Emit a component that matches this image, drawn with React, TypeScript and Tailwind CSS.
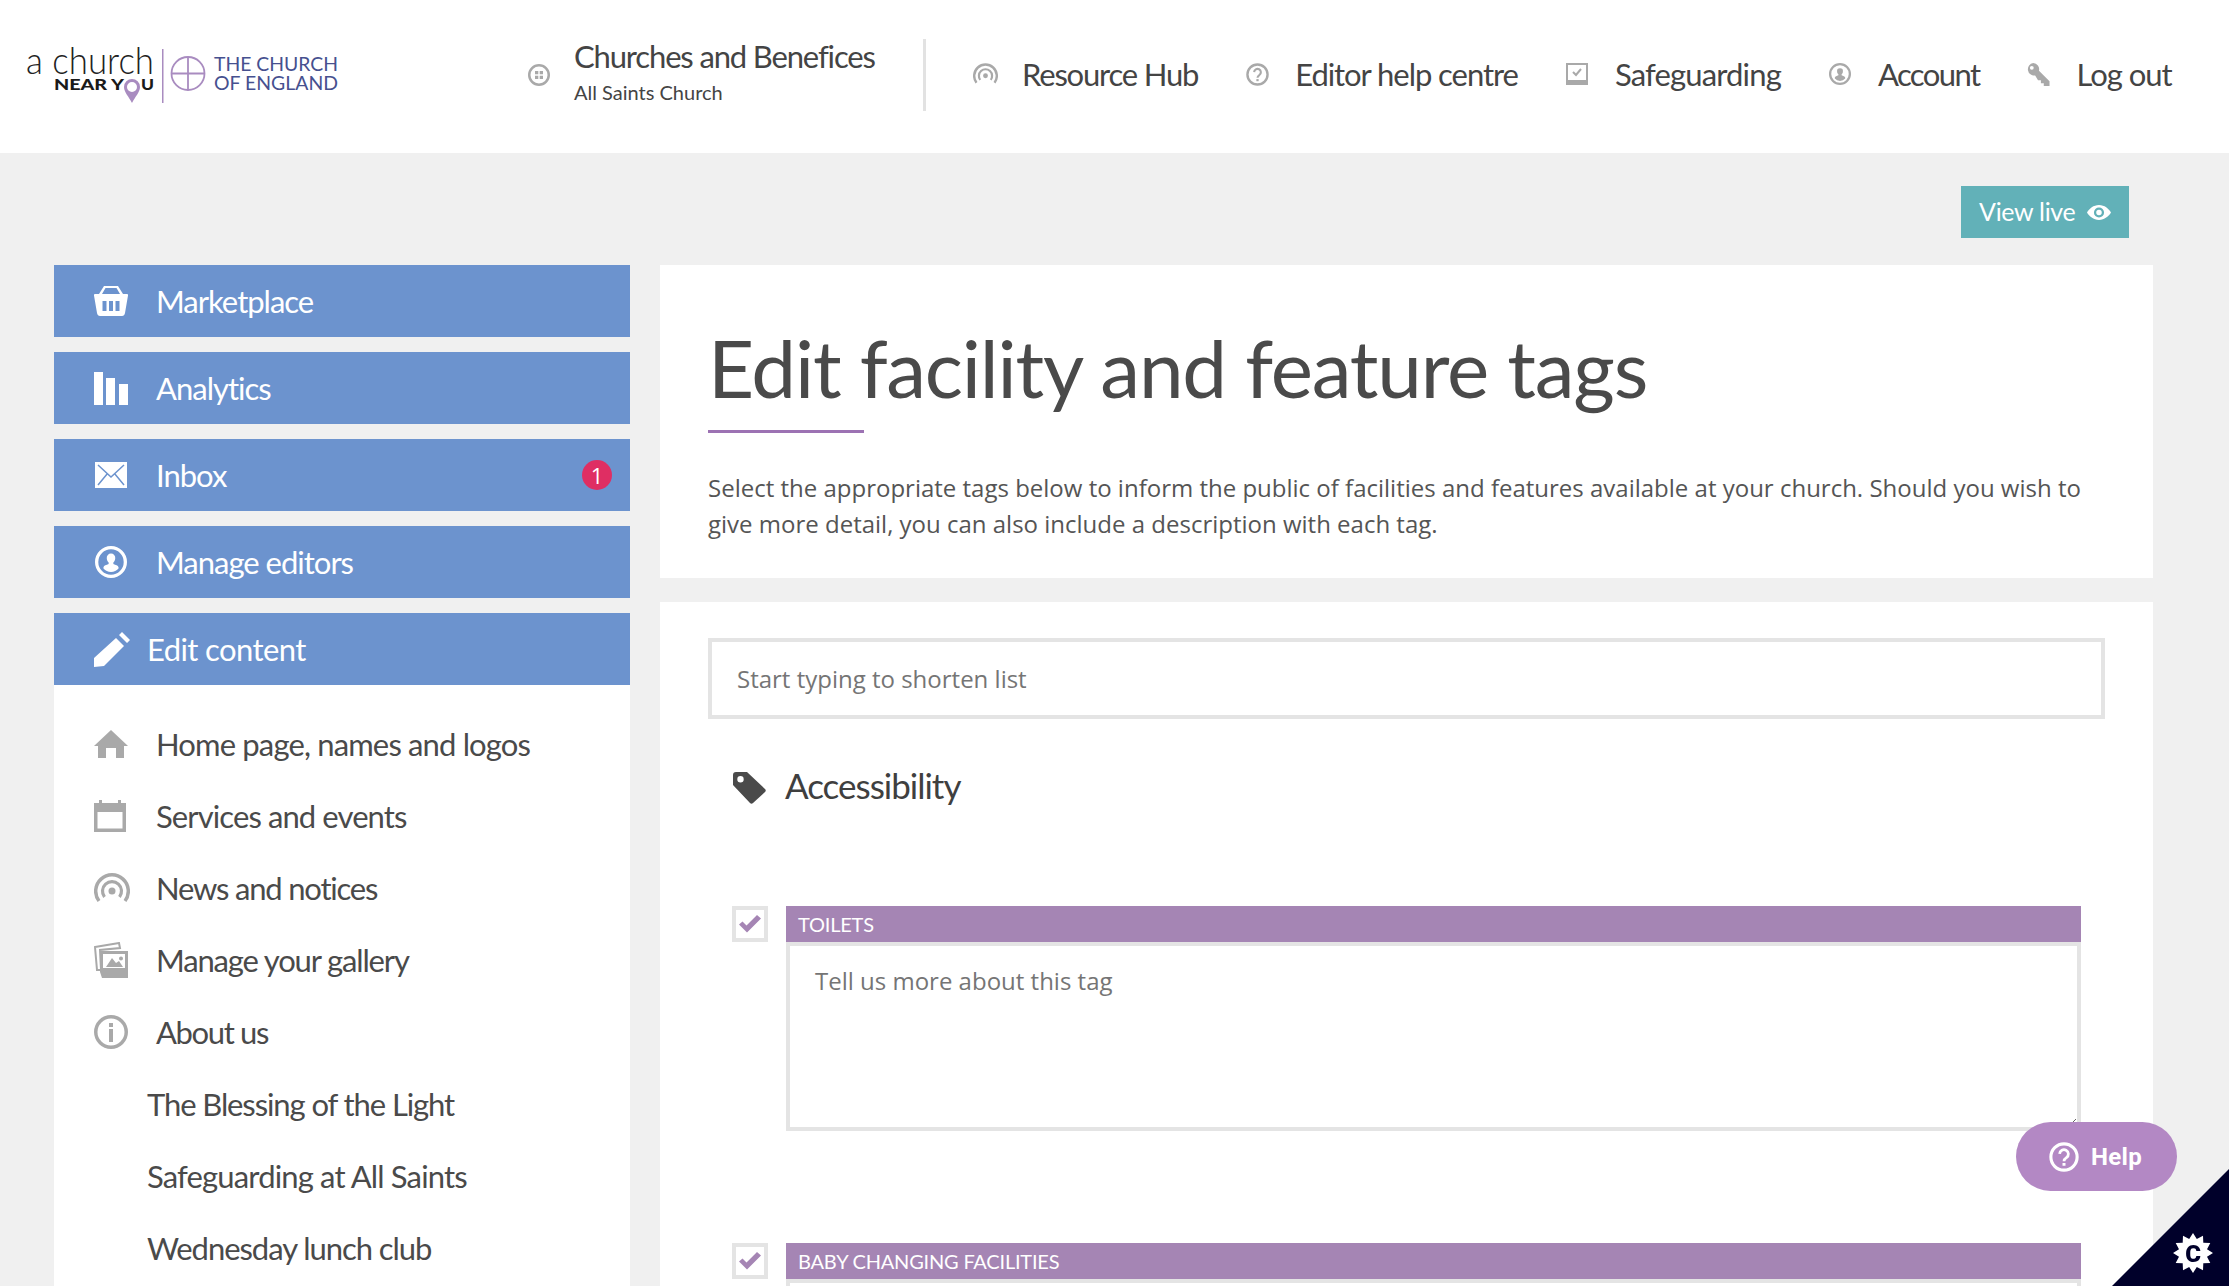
import type { ReactNode } from 'react';

const star = Array.from({ length: 24 }, (_, i) => {
  const r = i % 2 === 0 ? 20 : 14.5;
  const a = (i * Math.PI) / 12;
  return `${(38 + r * Math.sin(a)).toFixed(1)},${(84 + r * Math.cos(a)).toFixed(1)}`;
}).join(' ');

function Logo() {
  return (
    <svg width="315" height="60" viewBox="0 0 315 60" className="mt-px shrink-0 overflow-visible">
      <text x="0" y="28" fontFamily="Lato, sans-serif" fontWeight="300" fontSize="37" fill="#222" textLength="128" lengthAdjust="spacingAndGlyphs">a church</text>
      <text x="28" y="43.500" fontFamily="Lato, sans-serif" fontWeight="900" fontSize="15.5" fill="#1a1a1a" textLength="70" lengthAdjust="spacingAndGlyphs">NEAR Y</text>
      <text x="115" y="43.500" fontFamily="Lato, sans-serif" fontWeight="900" fontSize="15.5" fill="#1a1a1a" textLength="13" lengthAdjust="spacingAndGlyphs">U</text>
      <path fillRule="evenodd" d="M106 33a8 8 0 0 1 8 8c0 5-5 10-8 16-3-6-8-11-8-16a8 8 0 0 1 8-8zm0 3a5 5 0 1 0 0 10 5 5 0 0 0 0-10z" fill="#a98cc0" />
      <rect x="136" y="3" width="1.5" height="54" fill="#a98cc0" />
      <circle cx="162" cy="27.5" r="16.5" fill="none" stroke="#a98cc0" strokeWidth="1.8" />
      <path d="M162 11v33M145.5 27.5h33" stroke="#a98cc0" strokeWidth="1.8" />
      <text x="188" y="24.500" fontFamily="Lato, sans-serif" fontSize="19.5" fill="#46508f" textLength="124" lengthAdjust="spacingAndGlyphs">THE CHURCH</text>
      <text x="188" y="43.500" fontFamily="Lato, sans-serif" fontSize="19.5" fill="#46508f" textLength="124" lengthAdjust="spacingAndGlyphs">OF ENGLAND</text>
    </svg>
  );
}

type IconProps = { className?: string };

function Basket({ className }: IconProps) {
  return (
    <svg viewBox="0 0 34 30" className={className} fill="currentColor">
      <path fillRule="evenodd" d="M10 0h14l5 8h4a1 1 0 0 1 1 1.500L31 27c-.3 2-1.500 3-3 3H6c-1.500 0-2.700-1-3-3L0 9.500A1 1 0 0 1 1 8h4l5-8zm1.500 2L8 8h18l-3.500-6h-11zM8.500 15v10h4V15h-4zm6.500 0v10h4V15h-4zm6.500 0v10h4V15h-4z" />
    </svg>
  );
}

function Bars({ className }: IconProps) {
  return (
    <svg viewBox="0 0 34 33" className={className} fill="currentColor">
      <path d="M0 0h9v33H0zM12 6h9v27h-9zM25 12h9v21h-9z" />
    </svg>
  );
}

function Envelope({ className }: IconProps) {
  return (
    <svg viewBox="0 0 32 26" className={className}>
      <rect width="32" height="26" fill="currentColor" />
      <path d="M3 3l13 12L29 3M3 23l9.500-11.500M29 23L19.500 11.500" fill="none" stroke="#6c93ce" strokeWidth="1.500" />
    </svg>
  );
}

function UserCircle({ className }: IconProps) {
  return (
    <svg viewBox="0 0 34 34" className={className} fill="currentColor">
      <path fillRule="evenodd" d="M17 0a17 17 0 1 1 0 34 17 17 0 0 1 0-34zm0 3.500a13.500 13.500 0 1 0 0 27 13.500 13.500 0 0 0 0-27z" />
      <path d="M17 8a4.500 4.500 0 0 1 4.500 5c0 2-1 3.500-2 4.500v1.500c2.500 1 5 1.500 5.500 3.500v1.500a10.500 10.500 0 0 1-16 0v-1.500c.5-2 3-2.500 5.500-3.500v-1.500c-1-1-2-2.500-2-4.500A4.500 4.500 0 0 1 17 8z" />
    </svg>
  );
}

function Pencil({ className }: IconProps) {
  return (
    <svg viewBox="0 0 36 35" className={className} fill="currentColor">
      <path d="M28 0l8 8-3 3-8-8zM22 6l8 8-20 20-10 1v-9z" />
    </svg>
  );
}

function Home({ className }: IconProps) {
  return (
    <svg viewBox="0 0 34 28" className={className} fill="currentColor">
      <path d="M17 0l17 16h-4v12h-8V18H12v10H4V16H0z" />
    </svg>
  );
}

function Calendar({ className }: IconProps) {
  return (
    <svg viewBox="0 0 32 32" className={className} fill="currentColor">
      <path fillRule="evenodd" d="M5 0h3v3h16V0h3v3h5v29H0V3h5V0zM3.500 12v16.500h25V12h-25z" />
    </svg>
  );
}

function Radio({ className }: IconProps) {
  return (
    <svg viewBox="0 0 36 31" className={className} fill="none" stroke="currentColor">
      <path strokeWidth="3.500" d="M5 28A16.300 16.300 0 1 1 31 28" />
      <path strokeWidth="3.200" d="M10.500 24A9.500 9.500 0 1 1 25.500 24" />
      <circle cx="18" cy="18" r="3.500" fill="currentColor" stroke="none" />
    </svg>
  );
}

function Gallery({ className }: IconProps) {
  return (
    <svg viewBox="0 0 34 36" className={className}>
      <path d="M1 5l24-4 1 5-20 2 1 20H3z" fill="none" stroke="currentColor" strokeWidth="2" />
      <path fillRule="evenodd" fill="currentColor" d="M6 9h28v27H8l-2-6V9zm3 3v14h22V12H9z" />
      <path fill="currentColor" d="M12 25l6-9 4 5 3-2 4 6zM27 14.500a2 2 0 1 1 0 4 2 2 0 0 1 0-4z" />
    </svg>
  );
}

function Info({ className }: IconProps) {
  return (
    <svg viewBox="0 0 34 34" className={className} fill="currentColor">
      <path fillRule="evenodd" d="M17 0a17 17 0 1 1 0 34 17 17 0 0 1 0-34zm0 3.500a13.500 13.500 0 1 0 0 27 13.500 13.500 0 0 0 0-27z" />
      <path d="M15 8h4v4h-4zM15 14h4v13h-4z" />
    </svg>
  );
}

function Grid({ className }: IconProps) {
  return (
    <svg viewBox="0 0 22 22" className={className} fill="currentColor">
      <path fillRule="evenodd" d="M11 0a11 11 0 1 1 0 22 11 11 0 0 1 0-22zm0 2.500a8.500 8.500 0 1 0 0 17 8.500 8.500 0 0 0 0-17z" />
      <path d="M7 7h3.300v3.300H7zM11.700 7H15v3.300h-3.300zM7 11.700h3.300V15H7zM11.700 11.700H15V15h-3.300z" />
    </svg>
  );
}

function Question({ className }: IconProps) {
  return (
    <svg viewBox="0 0 24 24" className={className} fill="none" stroke="currentColor">
      <circle cx="12" cy="12" r="10.500" strokeWidth="2.500" />
      <path strokeWidth="2.200" d="M8.500 9.500a3.500 3.500 0 1 1 5.500 3c-1.200.8-2 1.300-2 2.800" />
      <path strokeWidth="2.400" d="M12 16.800v2.200" />
    </svg>
  );
}

function CheckSquare({ className }: IconProps) {
  return (
    <svg viewBox="0 0 22 22" className={className}>
      <path fillRule="evenodd" fill="currentColor" d="M0 0h22v22H0V0zm2 2v15h18V2H2z" />
      <path d="M7 9l3 3 5-6" fill="none" stroke="currentColor" strokeWidth="2" />
    </svg>
  );
}

function Key({ className }: IconProps) {
  return (
    <svg viewBox="0 0 23 24" className={className} fill="currentColor">
      <path fillRule="evenodd" d="M6 0a6.500 6.500 0 0 1 6 8l11 11v5h-6v-3h-3v-3h-3l-3-5A6.500 6.500 0 0 1 6 0zM4.500 3a2 2 0 1 0 0 4 2 2 0 0 0 0-4z" />
    </svg>
  );
}

function Eye({ className }: IconProps) {
  return (
    <svg viewBox="0 0 26 16" className={className} fill="currentColor">
      <path fillRule="evenodd" d="M13 0c6 0 10.500 4 13 8-2.500 4-7 8-13 8S2.500 12 0 8c2.500-4 7-8 13-8zm0 2.500a5.500 5.500 0 1 0 0 11 5.500 5.500 0 0 0 0-11zm0 2.500a3 3 0 1 1 0 6 3 3 0 0 1 0-6z" />
    </svg>
  );
}

function Tag({ className }: IconProps) {
  return (
    <svg viewBox="0 0 33 32" className={className} fill="currentColor">
      <path fillRule="evenodd" d="M3 0h11l18 17c1 1 1 2 0 3L20 31c-1 1-2 1-3 0L0 13V3c0-2 1-3 3-3zm4.500 4a3.200 3.200 0 1 0 0 6.400 3.200 3.200 0 0 0 0-6.400z" />
    </svg>
  );
}

function Check({ className }: IconProps) {
  return (
    <svg viewBox="0 0 22 18" className={className} fill="currentColor">
      <path d="M0 9.500l3.500-3 4 4L18 0l4 3.500L8 17.500z" />
    </svg>
  );
}

function NavLink({ icon, label, className }: { icon: ReactNode; label: string; className: string }) {
  return (
    <a className={`flex items-center text-[#444] ${className}`}>
      <span className="flex w-[49px] shrink-0 text-[#a9a9a9]">{icon}</span>
      {label}
    </a>
  );
}

function BlueItem({ icon, label, badge, tight }: { icon: ReactNode; label: string; badge?: string; tight?: boolean }) {
  return (
    <div className="flex h-[72px] items-center bg-[#6c93ce] pl-10 pr-[18px] text-white">
      <span className={tight ? 'flex w-[53px] shrink-0' : 'flex w-[62px] shrink-0'}>{icon}</span>
      <span className={tight ? 'text-[31px] tracking-[-0.6px]' : 'text-[31px] tracking-[-1px]'}>{label}</span>
      {badge && (
        <span className="ml-auto flex size-[30px] items-center justify-center rounded-full bg-[#df2e63] font-['Open_Sans',sans-serif] text-[22px] leading-none">
          {badge}
        </span>
      )}
    </div>
  );
}

function MenuItem({ icon, label, className }: { icon?: ReactNode; label: string; className: string }) {
  return (
    <div className={`flex h-[72px] items-center pl-10 text-[31px] text-[#4a4a4a] ${className}`}>
      {icon ? <span className="flex w-[62px] shrink-0 text-[#a9a9a9]">{icon}</span> : <span className="w-[53px] shrink-0" />}
      {label}
    </div>
  );
}

function TagRow({ label, className }: { label: string; className?: string }) {
  return (
    <div className={`flex items-start ${className ?? ''}`}>
      <div className="flex size-9 shrink-0 items-center justify-center border-4 border-[#e4e4e4] text-[#a585b4]">
        <Check className="h-[18px] w-[22px]" />
      </div>
      <div className="ml-[18px] flex-1">
        <div className="flex h-9 items-center bg-[#a585b4] pb-px pl-3 text-xl tracking-[-0.2px] text-white">{label}</div>
        <textarea
          placeholder="Tell us more about this tag"
          className="block h-[189px] w-full border-4 border-[#e4e4e4] px-[25px] py-[19px] font-['Open_Sans',sans-serif] text-2xl text-[#444] outline-none placeholder:text-[#757575]"
        />
      </div>
    </div>
  );
}

export default function App() {
  return (
    <div className="relative flex h-screen flex-col overflow-hidden bg-[#f0f0f0] font-[Lato,sans-serif]">
      <header className="flex h-[153px] shrink-0 items-center bg-white pb-[3px] pl-[26px]">
        <Logo />
        <div className="ml-[187px] flex items-center">
          <span className="flex w-[46px] text-[#a9a9a9]"><Grid className="size-[22px]" /></span>
          <div className="mt-[-7px] w-[349px]">
            <div className="text-[31px] leading-[38px] tracking-[-1.15px] text-[#444]">Churches and Benefices</div>
            <div className="mt-[3px] text-xl leading-7 tracking-normal text-[#444]">All Saints Church</div>
          </div>
        </div>
        <div className="h-[72px] w-[3px] bg-[#e2e2e2]" />
        <nav className="ml-[47px] mt-[-2px] flex items-center text-[31px]">
          <NavLink icon={<Radio className="h-[22px] w-[25px] text-[#a9a9a9]" />} label="Resource Hub" className="mr-[48px] tracking-[-1.2px]" />
          <NavLink icon={<Question className="size-[23px]" />} label="Editor help centre" className="mr-[48px] tracking-[-1.05px]" />
          <NavLink icon={<CheckSquare className="size-[22px]" />} label="Safeguarding" className="mr-[48px] tracking-[-0.85px]" />
          <NavLink icon={<UserCircle className="size-[22px]" />} label="Account" className="mr-[48px] tracking-[-1.6px]" />
          <NavLink icon={<Key className="size-[23px]" />} label="Log out" className="tracking-[-1px]" />
        </nav>
      </header>

      <div className="flex h-[112px] shrink-0 items-start justify-end pr-[100px] pt-[33px]">
        <a className="flex h-[52px] w-[168px] items-center bg-[#62b1b8] pl-[18px] text-[25px] tracking-[-0.3px] text-white">
          View live
          <Eye className="ml-3 h-[15px] w-[24px]" />
        </a>
      </div>

      <div className="flex min-h-0 flex-1 pl-[54px] pr-[76px]">
        <aside className="flex w-[576px] shrink-0 flex-col">
          <div className="flex flex-col gap-[15px]">
            <BlueItem icon={<Basket className="h-[30px] w-[34px]" />} label="Marketplace" />
            <BlueItem icon={<Bars className="h-[33px] w-[34px]" />} label="Analytics" />
            <BlueItem icon={<Envelope className="ml-px h-[26px] w-8" />} label="Inbox" badge="1" />
            <BlueItem icon={<UserCircle className="ml-px size-8" />} label="Manage editors" />
            <BlueItem icon={<Pencil className="h-[35px] w-9" />} label="Edit content" tight />
          </div>
          <div className="flex-1 bg-white pt-[23px]">
            <MenuItem icon={<Home className="h-[28px] w-[34px]" />} label="Home page, names and logos" className="tracking-[-0.85px]" />
            <MenuItem icon={<Calendar className="size-[32px]" />} label="Services and events" className="tracking-[-0.9px]" />
            <MenuItem icon={<Radio className="h-[31px] w-[36px]" />} label="News and notices" className="tracking-[-1.2px]" />
            <MenuItem icon={<Gallery className="h-[36px] w-[34px]" />} label="Manage your gallery" className="tracking-[-1.15px]" />
            <MenuItem icon={<Info className="size-[34px]" />} label="About us" className="tracking-[-1.35px]" />
            <MenuItem label="The Blessing of the Light" className="tracking-[-1.1px]" />
            <MenuItem label="Safeguarding at All Saints" className="tracking-[-0.85px]" />
            <MenuItem label="Wednesday lunch club" className="tracking-[-1.05px]" />
          </div>
        </aside>

        <main className="ml-[30px] flex min-w-0 flex-1 flex-col">
          <section className="h-[313px] shrink-0 bg-white px-12 pt-[52px]">
            <h1 className="text-[80px] leading-[1.25] tracking-[-1.2px] text-[#4a4a4a]">Edit facility and feature tags</h1>
            <div className="mt-[13px] h-[3px] w-[156px] bg-[#9c72b3]" />
            <p className="mt-[37px] font-['Open_Sans',sans-serif] text-2xl leading-9 text-[#555]">
              Select the appropriate tags below to inform the public of facilities and features available at your church. Should you wish to give more detail, you can also include a description with each tag.
            </p>
          </section>

          <section className="mt-6 flex-1 bg-white px-12 pt-9">
            <input
              placeholder="Start typing to shorten list"
              className="block h-[81px] w-full border-4 border-[#e4e4e4] px-[25px] font-['Open_Sans',sans-serif] text-2xl outline-none placeholder:text-[#757575]"
            />
            <div className="mt-[47px] flex h-11 items-center pl-[25px] text-[35px] tracking-[-1px] text-[#3f3f3f]">
              <Tag className="mr-[19px] h-8 w-[33px] text-[#4a4a4a]" />
              <span className="pb-[5px]">Accessibility</span>
            </div>
            <div className="mt-24 px-6">
              <TagRow label="TOILETS" />
              <TagRow label="BABY CHANGING FACILITIES" className="mt-28" />
            </div>
          </section>
        </main>
      </div>

      <button className="fixed left-[2016px] top-[1122px] flex h-[69px] w-[161px] items-center rounded-full bg-[#b388c4] pl-[33px] font-[Roboto,sans-serif] text-2xl font-bold tracking-[0.3px] text-white">
        <Question className="mr-3 size-[30px]" />
        Help
      </button>

      <svg width="117" height="117" viewBox="0 0 117 117" className="fixed bottom-0 right-0">
        <path d="M117 0v117H0z" fill="#00002a" />
        <g transform="translate(43 0)">
          <polygon points={star} fill="#fff" />
          <text x="38" y="92.500" textAnchor="middle" fontFamily="Roboto, sans-serif" fontWeight="900" fontSize="24" fill="#00002a">C</text>
        </g>
      </svg>
    </div>
  );
}
